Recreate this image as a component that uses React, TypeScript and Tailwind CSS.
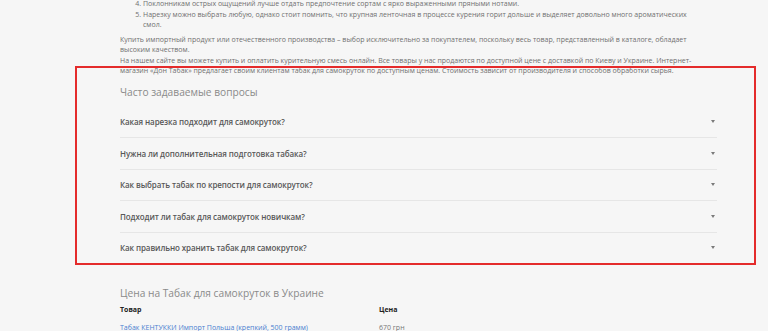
import React from "react";

const questions = [
  "Какая нарезка подходит для самокруток?",
  "Нужна ли дополнительная подготовка табака?",
  "Как выбрать табак по крепости для самокруток?",
  "Подходит ли табак для самокруток новичкам?",
  "Как правильно хранить табак для самокруток?",
];

function Caret() {
  return (
    <svg width="4" height="3" viewBox="0 0 4 3" className="shrink-0">
      <path d="M0 0 H4 L2 3 Z" fill="#7a7a7a" />
    </svg>
  );
}

export default function App() {
  return (
    <div className="relative min-h-[331px] overflow-hidden bg-[#f6f6f6] font-['Open_Sans',sans-serif]">
      <div className="ml-[120px] w-[597px]">
        {/* текст статьи */}
        <ol start={4} className="-mt-[1px] list-decimal pl-[23px] text-[7px] leading-[10.5px] text-[#707070]">
          <li>Поклонникам острых ощущений лучше отдать предпочтение сортам с ярко выраженными пряными нотами.</li>
          <li>
            Нарезку можно выбрать любую, однако стоит помнить, что крупная ленточная в процессе курения горит дольше и выделяет довольно много ароматических
            <br />
            смол.
          </li>
        </ol>
        <p className="mt-[4px] text-[7px] leading-[10.5px] text-[#707070]">
          Купить импортный продукт или отечественного производства – выбор исключительно за покупателем, поскольку весь товар, представленный в каталоге, обладает
          <br />
          высоким качеством.
          <br />
          На нашем сайте вы можете купить и оплатить курительную смесь онлайн. Все товары у нас продаются по доступной цене с доставкой по Киеву и Украине. Интернет-
          <br />
          магазин «Дон Табак» предлагает своим клиентам табак для самокруток по доступным ценам. Стоимость зависит от производителя и способов обработки сырья.
        </p>

        {/* вопросы */}
        <h2 className="mt-[8px] text-[10.2px] leading-[15px] font-normal text-[#8a8a8a]">Часто задаваемые вопросы</h2>
        <div className="mt-[7px]">
          {questions.map((q, i) => (
            <div
              key={q}
              className={
                "flex items-center justify-between pr-[2px] pt-[9.5px] pb-[10px] " +
                (i < questions.length - 1 ? "border-b border-[#e6e6e6]" : "")
              }
            >
              <span className="text-[8px] leading-[11px] font-semibold tracking-[-0.1px] text-[#585858]">{q}</span>
              <Caret />
            </div>
          ))}
        </div>

        {/* цены */}
        <h2 className="mt-[23px] text-[10.2px] leading-[15px] font-normal text-[#8a8a8a]">Цена на Табак для самокруток в Украине</h2>
        <div className="grid grid-cols-[259px_1fr] text-[7px]">
          <div className="flex h-[18px] items-center font-bold text-[#222]">Товар</div>
          <div className="flex h-[18px] items-center font-bold text-[#222]">Цена</div>
          <div className="flex h-[18px] items-center text-[#4a7fd0]">Табак КЕНТУККИ Импорт Польша (крепкий, 500 грамм)</div>
          <div className="flex h-[18px] items-center text-[#777]">670 грн</div>
        </div>
      </div>

      {/* красная рамка-выделение поверх блока */}
      <div className="pointer-events-none absolute left-[75px] top-[66px] h-[199px] w-[681px] border-2 border-[#e42b2b]" />
    </div>
  );
}
